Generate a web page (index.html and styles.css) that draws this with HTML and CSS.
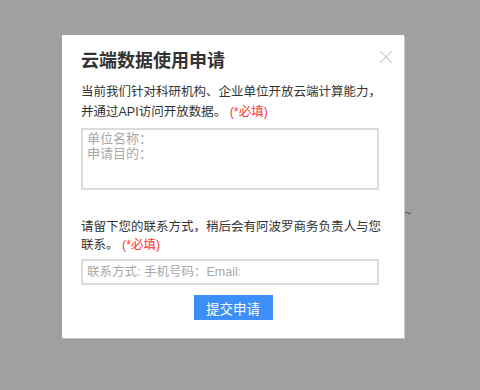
FILE: index.html
```html
<!DOCTYPE html>
<html lang="zh-CN">
<head>
<meta charset="UTF-8">
<meta name="viewport" content="width=device-width, initial-scale=1.0">
<title>云端数据使用申请</title>
<link rel="stylesheet" href="styles.css">
</head>
<body>
<span class="bg-mark">~</span>
<div class="modal">
    <span class="close">
        <svg width="14" height="14" viewBox="0 0 14 14"><path d="M1 1L13 13M13 1L1 13" stroke="#cfcfcf" stroke-width="1.3" fill="none"/></svg>
    </span>
    <h2>云端数据使用申请</h2>
    <p>当前我们针对科研机构、企业单位开放云端计算能力，<br><span>并通过API访问开放数据。</span> <em>(*必填)</em></p>
    <textarea class="apply" placeholder="单位名称：&#10;申请目的："></textarea>
    <p class="contact">请留下您的联系方式，稍后会有阿波罗商务负责人与您<br><span>联系。</span> <em>(*必填)</em></p>
    <input type="text" class="phone" placeholder="联系方式: 手机号码：Email:">
    <div class="actions">
        <button type="button">提交申请</button>
    </div>
</div>
</body>
</html>
```

FILE: styles.css
```css
body { margin: 0; height: 390px; background: #a0a0a0;
    font-family: "Liberation Sans", "Noto Sans CJK SC", sans-serif;
    color: #333; overflow: hidden; position: relative;
}
.bg-mark { position: absolute; left: 404px; top: 205px;
    font-size: 13px; color: #555;
}
.modal { position: relative; box-sizing: border-box; width: 342px;
    height: 303px; margin: 35px 0 0 62px; background: #fff;
    padding: 12px 19px 0; box-shadow: 1px 1px 0 #c8c8c8;
}
.close { position: absolute; right: 11px; top: 15px; line-height: 0; }
h2 { margin: 0; font-size: 18px; line-height: 28px; font-weight: bold;
    color: #333;
}
p { margin: 7px 0 0; font-size: 12.5px; line-height: 20px; }
p em { font-style: normal; color: #f33; }
textarea, input { display: block; box-sizing: border-box; width: 298px;
    border: 2px solid #dcdcdc; font-family: inherit; font-size: 13px;
    color: #333; outline: none; resize: none; margin: 0;
}
textarea::placeholder, input::placeholder { color: #a8a8a8; }
.apply { height: 62px; margin-top: 6px; padding: 2px 4px;
    line-height: 14.5px;
}
.contact { margin-top: 28px; line-height: 18px; }
.phone { height: 26px; margin-top: 5px; padding: 0 4px; font-size: 12.5px; }
.actions { display: flex; justify-content: center; margin-top: 10px; }
button { width: 79px; height: 25px; border: none; background: #3b8ff6;
    color: #fff; font-family: inherit; font-size: 13.5px; padding: 0;
}
```
